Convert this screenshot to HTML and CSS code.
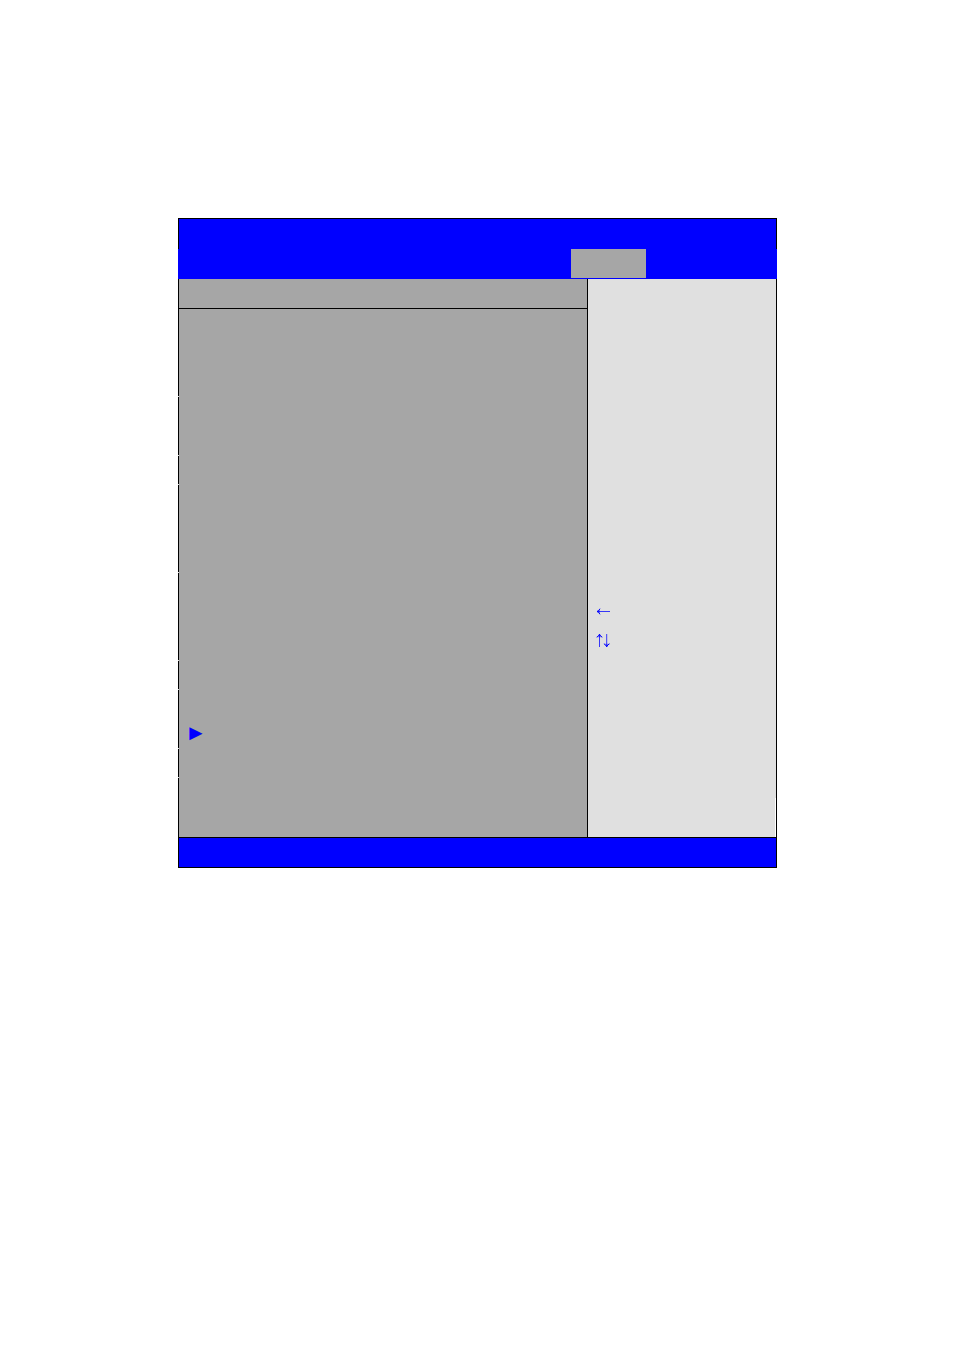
FILE: index.html
```html
<!DOCTYPE html>
<html lang="en">
<head>
    <meta charset="UTF-8">
    <meta name="viewport" content="width=device-width, initial-scale=1.0">
    <title>Setup Utility</title>
    <link rel="stylesheet" href="styles.css">
</head>
<body>
    <main class="setup">
        <header class="menu-bar">
            <button type="button" class="tab" aria-label="Selected menu"></button>
        </header>
        <div class="content">
            <section class="options">
                <div class="options-title"></div>
                <ul class="rows">
                    <li></li>
                    <li></li>
                    <li class="break"></li>
                    <li></li>
                    <li class="break"></li>
                    <li class="break"></li>
                    <li></li>
                    <li></li>
                    <li class="break"></li>
                    <li></li>
                    <li></li>
                    <li class="break"></li>
                    <li class="break"></li>
                    <li></li>
                    <li class="break"><span class="marker">►</span></li>
                    <li class="break"></li>
                    <li></li>
                    <li></li>
                </ul>
            </section>
            <aside class="help">
                <div class="key">
                    <svg width="15" height="15" viewBox="0 0 15 15" role="img" aria-label="Left">
                        <path class="shaft" d="M1 7.5H14"/>
                        <path class="head" d="M4 4.7C3.4 6 2.4 7 1 7.5C2.4 8 3.4 9 4 10.3"/>
                    </svg>
                </div>
                <div class="key">
                    <svg width="15" height="15" viewBox="0 0 15 15" role="img" aria-label="Up and down">
                        <path class="shaft" d="M3.5 1V14"/>
                        <path class="head" d="M0.7 4.2C2 3.6 3 2.6 3.5 1.2C4 2.6 5 3.6 6.3 4.2"/>
                        <path class="shaft" d="M10.7 1V14"/>
                        <path class="head" d="M7.9 10.8C9.2 11.4 10.2 12.4 10.7 13.8C11.2 12.4 12.2 11.4 13.5 10.8"/>
                    </svg>
                </div>
            </aside>
        </div>
        <footer class="status-bar"></footer>
    </main>
</body>
</html>
```

FILE: styles.css
```css
body {
    margin: 0;
    padding: 218px 177px 100px 178px;
    background-color: #fff;
    color: #00f;
    font-family: "Liberation Sans", Arial, sans-serif;
}
.menu-bar {
    display: flex;
    justify-content: flex-end;
    background-color: #00f;
    /* the side borders stop halfway down the bar */
    border: 1px solid #000;
    border-bottom: none;
    border-image: linear-gradient(#000 50%, #00f 50%) 1;
    padding: 30px 130px 1px 0;
}
.tab {
    width: 75px;
    height: 29px;
    padding: 0;
    border: none;
    background-color: #a6a6a6;
}
.content {
    display: grid;
    grid-template-columns: minmax(0, 1fr) 189px;
    border-right: 1px solid #000;
}
.options {
    background-color: #a6a6a6;
}
.options-title {
    height: 29px;
    border-left: 1px solid #000;
    border-bottom: 1px solid #000;
}
.rows {
    display: grid;
    grid-template-rows: repeat(18, 1fr);
    height: 528px;
    margin: 0;
    padding: 0;
    list-style: none;
}
.rows li {
    display: flex;
    align-items: center;
}
.rows li::before {
    content: "";
    box-sizing: border-box;
    width: 1px;
    height: 100%;
    background-color: #000;
}
.rows .break::before {
    border-bottom: 1px solid #d8d8d8;
}
.marker {
    padding: 0 0 2px 6px;
    font-size: 22px;
    line-height: 16px;
}
.help {
    padding: 318px 8px 0;
    border-left: 1px solid #000;
    background: linear-gradient(#fff, #fff) right bottom / 1px 39px no-repeat #e0e0e0;
}
.key {
    display: flex;
    align-items: center;
    height: 29px;
}
.shaft {
    fill: none;
    stroke: #00f;
    stroke-opacity: 0.75;
}
.head {
    fill: #00f;
    fill-opacity: 0.4;
    stroke: #00f;
}
.status-bar {
    height: 29px;
    border: 1px solid #000;
    background-color: #00f;
}
```
